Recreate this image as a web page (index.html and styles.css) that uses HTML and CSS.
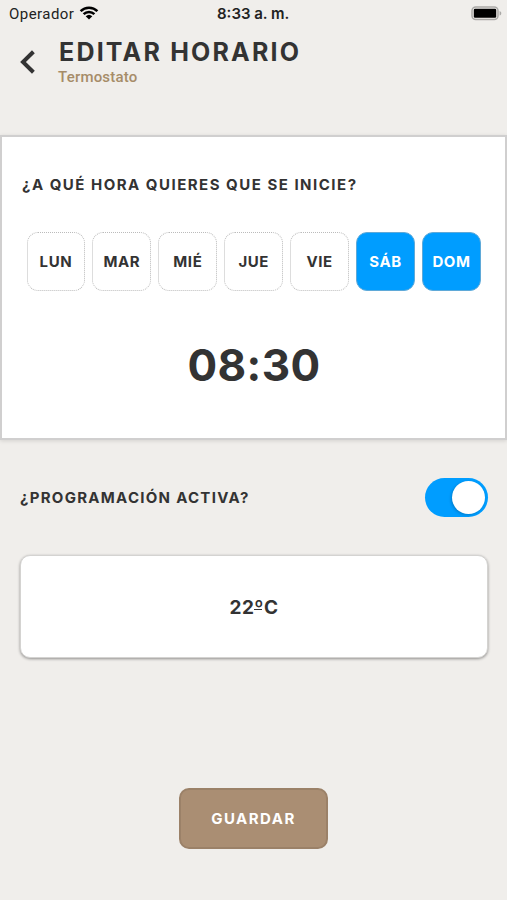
FILE: index.html
```html
<!DOCTYPE html>
<html lang="es">
<head>
<meta charset="UTF-8">
<meta name="viewport" content="width=device-width, initial-scale=1.0">
<title>Editar horario</title>
<link rel="stylesheet" href="styles.css">
</head>
<body>

<div class="status-bar">
    <div class="carrier">
        <span>Operador</span>
        <svg class="wifi" viewBox="0 0 20 14" width="20" height="14">
            <path d="M1.6 5.1A12 12 0 0 1 18.4 5.1M4.6 8.2A7.7 7.7 0 0 1 15.4 8.2" fill="none" stroke="#000" stroke-width="2.5"/>
            <path d="M10 13.6L6.7 10.3A4.8 4.8 0 0 1 13.3 10.3Z"/>
        </svg>
    </div>
    <div class="clock">8:33 a. m.</div>
    <svg class="battery" viewBox="0 0 31 15" width="31" height="15">
        <rect x="1" y="1" width="26" height="12.6" rx="3.8" fill="#f0eeeb" stroke="#aaa9a7" stroke-width="1.5"/>
        <path d="M28.6 5v4.6c2.3-.8 2.3-3.8 0-4.6z" fill="#aaa9a7"/>
        <rect x="2.8" y="2.8" width="22.4" height="9" rx="1.2"/>
    </svg>
</div>

<header class="header">
    <svg class="back" viewBox="0 0 16 24" width="16" height="24">
        <path d="M13.4 1.8L3 12l10.4 10.2" fill="none" stroke="#333" stroke-width="4"/>
    </svg>
    <div>
        <h1 class="title">EDITAR HORARIO</h1>
        <p class="subtitle">Termostato</p>
    </div>
</header>

<section class="schedule">
    <h2 class="label">¿A QUÉ HORA QUIERES QUE SE INICIE?</h2>
    <div class="days">
        <div class="day">LUN</div>
        <div class="day">MAR</div>
        <div class="day">MIÉ</div>
        <div class="day">JUE</div>
        <div class="day">VIE</div>
        <div class="day selected">SÁB</div>
        <div class="day selected">DOM</div>
    </div>
    <div class="time">08:30</div>
</section>

<div class="active-row">
    <h2 class="label active-label">¿PROGRAMACIÓN ACTIVA?</h2>
    <div class="switch"><div class="knob"></div></div>
</div>

<div class="temperature">22<span class="ordinal">º</span>C</div>

<button class="save">GUARDAR</button>

</body>
</html>
```
FILE: styles.css
```css
* {
    box-sizing: border-box;
}
body, html {
    height: 100%;
    margin: 0;
}
body {
    display: flex;
    flex-direction: column;
    font-family: Inter, "Liberation Sans", sans-serif;
    background-color: #f0eeeb;
    color: #333;
    overflow: hidden;
}
h1, h2, p {
    margin: 0;
}
.status-bar {
    display: flex;
    align-items: flex-start;
    height: 37px;
    padding: 5px 5px 0 9px;
    color: #222;
}
.carrier {
    display: flex;
    width: 208px;
    font: 15px/18px Roboto, sans-serif;
    letter-spacing: 0.45px;
}
.wifi {
    margin: 1px 0 0 5px;
}
.clock {
    flex: 1;
    font-size: 15px;
    font-weight: 600;
    line-height: 18px;
}
.battery {
    margin-top: 1px;
}
.header {
    display: flex;
    height: 98px;
    padding-left: 20px;
}
.back {
    margin: 13px 22px 0 0;
}
.title {
    padding-left: 1px;
    font-size: 25px;
    font-weight: 700;
    line-height: 31px;
    letter-spacing: 2.2px;
    white-space: nowrap;
}
.subtitle {
    font: 500 15px/18px Roboto, sans-serif;
    letter-spacing: 0.2px;
    color: #a68c68;
}
.schedule {
    height: 305px;
    padding: 39px 24px 0 20px;
    background: #fff;
    border: 2px solid #d0cfcf;
    box-shadow: 0 1px 4px rgba(0, 0, 0, 0.12);
}
.label {
    font-size: 15px;
    font-weight: 700;
    line-height: 18px;
    letter-spacing: 1.5px;
    white-space: nowrap;
}
.active-label {
    letter-spacing: 1.28px;
}
.days {
    display: flex;
    gap: 7px;
    margin: 38px 0 0 4.5px;
}
.day {
    width: 59px;
    height: 59px;
    border: 1px dotted #bbb;
    border-radius: 11px;
    font-size: 15px;
    font-weight: 700;
    line-height: 57px;
    text-align: center;
    letter-spacing: 0.6px;
}
.day.selected {
    color: #fff;
    background: #009dff;
    border: 1px solid #5fa9d8;
}
.time {
    margin-top: 47px;
    padding-left: 5px;
    font-size: 44px;
    font-weight: 700;
    line-height: 54px;
    text-align: center;
    letter-spacing: 0.4px;
}
.active-row {
    display: flex;
    justify-content: space-between;
    align-items: center;
    height: 115px;
    padding: 0 19px 0 20px;
}
.switch {
    width: 63px;
    height: 39px;
    padding: 3px;
    border-radius: 20px;
    background: #009dff;
}
.knob {
    width: 33px;
    height: 33px;
    margin-left: auto;
    border-radius: 50%;
    background: #fff;
    box-shadow: -1px 1px 3px rgba(0, 0, 0, 0.2);
}
.temperature {
    height: 103px;
    margin: 0 19px 0 20px;
    border: 1px solid #d4d3d1;
    border-radius: 10px;
    background: #fff;
    box-shadow: 0 1px 3px rgba(0, 0, 0, 0.4);
    font-size: 19px;
    font-weight: 700;
    line-height: 103px;
    text-align: center;
    letter-spacing: 0.4px;
}
/* the ordinal sign carries its own small underline */
.ordinal {
    background: linear-gradient(#333, #333) no-repeat 0 13px / 8px 1px;
}
.save {
    width: 149px;
    height: 61px;
    margin: 130px auto 0 179px;
    padding: 0;
    border: 2px solid #9b8168;
    border-radius: 10px;
    background: #aa8e73;
    color: #fff;
    font: 700 15px Inter, sans-serif;
    letter-spacing: 1.5px;
}
```
